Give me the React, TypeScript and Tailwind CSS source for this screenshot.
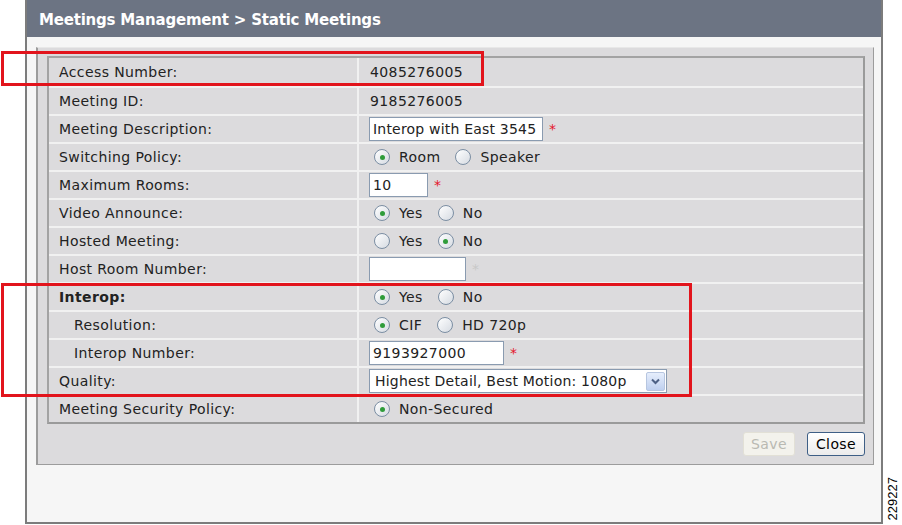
import React from "react";

const font = { fontFamily: '"DejaVu Sans", Verdana, sans-serif' };

function Radio({ checked }: { checked?: boolean }) {
  return (
    <span className="flex h-[16px] w-[16px] shrink-0 items-center justify-center rounded-full border border-[#7b8ea3] bg-gradient-to-br from-white to-[#d6dbe2]">
      {checked && <span className="h-[5px] w-[5px] rounded-full bg-[#2f9c3a]" />}
    </span>
  );
}

function RadioGroup({ options, selected }: { options: string[]; selected: number }) {
  return (
    <div className="flex items-center pl-[5px]">
      {options.map((o, i) => (
        <label key={o} className="mr-[15px] flex items-center gap-[9px]">
          <Radio checked={i === selected} />
          <span>{o}</span>
        </label>
      ))}
    </div>
  );
}

function Field({ value, width, star = "red" }: { value: string; width: string; star?: "red" | "gray" }) {
  return (
    <div className="flex items-center">
      <div
        className={`${width} flex h-[24px] items-center overflow-hidden whitespace-nowrap border border-[#8a9bb0] bg-white px-[3px]`}
      >
        {value}
      </div>
      <span className={star === "red" ? "ml-[6px] text-[#e4162c]" : "ml-[6px] text-[#c8c8c8]"}>*</span>
    </div>
  );
}

const rows: { label: string; bold?: boolean; indent?: boolean; value: React.ReactNode }[] = [
  { label: "Access Number:", value: <span className="pl-[1px]">4085276005</span> },
  { label: "Meeting ID:", value: <span className="pl-[1px]">9185276005</span> },
  {
    label: "Meeting Description:",
    value: <Field value="Interop with East 3545" width="w-[174px] tracking-[0.2px]" />,
  },
  { label: "Switching Policy:", value: <RadioGroup options={["Room", "Speaker"]} selected={0} /> },
  { label: "Maximum Rooms:", value: <Field value="10" width="w-[59px]" /> },
  { label: "Video Announce:", value: <RadioGroup options={["Yes", "No"]} selected={0} /> },
  { label: "Hosted Meeting:", value: <RadioGroup options={["Yes", "No"]} selected={1} /> },
  { label: "Host Room Number:", value: <Field value="" width="w-[97px]" star="gray" /> },
  { label: "Interop:", bold: true, value: <RadioGroup options={["Yes", "No"]} selected={0} /> },
  { label: "Resolution:", indent: true, value: <RadioGroup options={["CIF", "HD 720p"]} selected={0} /> },
  { label: "Interop Number:", indent: true, value: <Field value="9193927000" width="w-[135px]" /> },
  {
    label: "Quality:",
    value: (
      <div className="flex h-[24px] w-[298px] items-center justify-between whitespace-nowrap border border-[#8a9bb0] bg-white pl-[5px] pr-[1px] tracking-[0.2px]">
        <span>Highest Detail, Best Motion: 1080p</span>
        <span className="flex h-[19px] w-[19px] items-center justify-center rounded-[2px] border border-[#b7c6e0] bg-gradient-to-b from-[#e6eefc] to-[#bfd0ef]">
          <svg width="9" height="7" viewBox="0 0 9 7">
            <path d="M1 1.5 L4.5 5 L8 1.5" fill="none" stroke="#4d6185" strokeWidth="2" />
          </svg>
        </span>
      </div>
    ),
  },
  { label: "Meeting Security Policy:", value: <RadioGroup options={["Non-Secured"]} selected={0} /> },
];

export default function App() {
  return (
    <div className="relative h-[525px] w-[902px] overflow-hidden bg-white text-[14px] tracking-[0.4px] text-[#222]" style={font}>
      <div className="ml-[25px] flex h-[524px] w-[858px] flex-col border-x-2 border-b-2 border-[#7c7c7c] bg-[#f6f6f6]">
        <div className="flex h-[37px] shrink-0 items-center bg-[#6c7483] pl-[12px] pt-[3px] text-[15px] font-bold tracking-[-0.2px] text-white">
          Meetings Management &gt; Static Meetings
        </div>
        <div className="ml-[9px] mr-[7px] mt-[10px] border border-l-2 border-[#9c9c9c] border-t-[#e8e8e8] bg-[#dcdbdd] pl-[9px] pr-[8px] pt-[8px] pb-[8px]">
          <div className="border-2 border-[#a3a3a3] border-b-[#9a9a9a] border-r-[#9a9a9a]">
            {rows.map((r, i) => (
              <div key={r.label} className={`flex h-[28px] items-center ${i > 0 ? "border-t-2 border-[#f1f1f1]" : ""}`}>
                <div
                  className={`flex h-full w-[310px] items-center border-r-2 border-[#f1f1f1] ${r.indent ? "pl-[25px]" : "pl-[10px]"} ${r.bold ? "font-bold" : ""}`}
                >
                  {r.label}
                </div>
                <div className="flex h-full items-center pl-[10px]">{r.value}</div>
              </div>
            ))}
          </div>
          <div className="mt-[8px] flex justify-end gap-[12px]">
            <button className="h-[24px] w-[52px] rounded-[3px] border border-[#e2e0d6] bg-[#f3f2ec] text-[14px] text-[#b9b9b2]">
              Save
            </button>
            <button className="h-[24px] w-[58px] rounded-[3px] border border-[#3e5f86] bg-gradient-to-b from-white to-[#ececec] text-[14px] text-black">
              Close
            </button>
          </div>
        </div>
      </div>
      <div className="absolute left-[1px] top-[51px] h-[35px] w-[483px] border-[3px] border-[#e2141c]" />
      <div className="absolute left-[1px] top-[283px] h-[114px] w-[691px] border-[3px] border-[#e2141c]" />
      <div
        className="absolute left-[868px] top-[489px] w-[50px] -rotate-90 text-center text-[13px] tracking-normal text-black"
        style={{ fontFamily: '"Liberation Sans", Arial, sans-serif' }}
      >
        229227
      </div>
    </div>
  );
}
